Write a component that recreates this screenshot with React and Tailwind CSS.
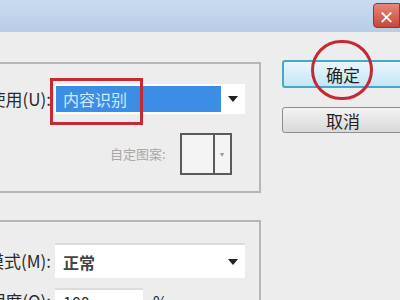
import React from "react";

const Arrow = () => (
  <span className="w-0 h-0 border-l-[5px] border-r-[5px] border-t-[6px] border-l-transparent border-r-transparent border-t-[#222]" />
);

const App = () => {
  return (
    <div
      className="relative w-[400px] h-[300px] overflow-hidden bg-[#ededed] text-[#2a2a2a]"
      style={{ fontFamily: '"Noto Sans CJK SC", "Noto Sans", sans-serif' }}
    >
      {/* Title bar */}
      <div className="h-[32px] bg-gradient-to-b from-[#c9dcf0] to-[#b7cde6] flex justify-end items-start">
        <div className="mt-[3px] w-[27px] h-[25px] rounded-l-[4px] bg-gradient-to-b from-[#e6877b] to-[#c5463a] border border-[#8d3a33] flex items-center justify-center text-white text-[16px] font-bold leading-none">
          ×
        </div>
      </div>

      <div className="flex">
        {/* Left: option groups */}
        <div className="w-[261px] shrink-0">
          {/* Content group */}
          <div className="mt-[30px] h-[131px] border-t-2 border-r-2 border-b-2 border-[#b6b6b6] pt-[20px]">
            <div className="flex items-center h-[30px]">
              <span className="w-[51px] shrink-0 text-[17px] whitespace-nowrap flex justify-end">
                <span className="-ml-[60px]">使用(U):</span>
              </span>
              <div className="ml-[4px] w-[190px] h-[30px] bg-white flex items-center">
                <div className="w-[165px] h-[26px] ml-[1px] bg-[#3c8de4] flex items-center pl-[7px] text-[16px] text-[#d6e7fa]">
                  内容识别
                </div>
                <div className="flex-1 flex justify-center">
                  <Arrow />
                </div>
              </div>
            </div>
            <div className="flex items-center mt-[19px] ml-[110px]">
              <span className="text-[13px] text-[#a9a9a9] whitespace-nowrap">自定图案:</span>
              <div className="ml-[14px] w-[52px] h-[42px] border-2 border-[#5a5a5a] bg-[#f4f4f4] flex">
                <div className="w-[33px] border-r-2 border-[#5a5a5a]" />
                <div className="flex-1 flex items-center justify-center text-[#999] text-[8px]">▾</div>
              </div>
            </div>
          </div>

          {/* Blending group */}
          <div className="mt-[27px] h-[100px] border-t-2 border-r-2 border-[#b6b6b6] pt-[21px]">
            <div className="flex items-center h-[35px]">
              <span className="w-[51px] shrink-0 text-[17px] whitespace-nowrap flex justify-end">
                <span className="-ml-[60px]">模式(M):</span>
              </span>
              <div className="ml-[4px] w-[190px] h-[35px] bg-white border-t-2 border-[#dcdcdc] flex items-center">
                <span className="flex-1 pl-[8px] text-[16px] font-bold text-[#444]">正常</span>
                <span className="w-[24px] flex justify-center">
                  <Arrow />
                </span>
              </div>
            </div>
            <div className="flex items-center mt-[10px] h-[26px]">
              <span className="w-[51px] shrink-0 text-[17px] whitespace-nowrap flex justify-end">
                <span className="-ml-[100px]">不透明度(O):</span>
              </span>
              <div className="ml-[4px] w-[88px] h-[26px] bg-white border-t-2 border-[#dcdcdc] pl-[8px] text-[16px]">100</div>
              <span className="ml-[10px] text-[16px]">%</span>
            </div>
          </div>
        </div>

        {/* Right: buttons */}
        <div className="ml-[21px] pt-[28px] flex flex-col gap-[19px]">
          <button className="w-[130px] h-[28px] rounded-[3px] border-2 border-[#46a9cc] bg-gradient-to-b from-[#eaf6fd] to-[#c4e6f8] text-[17px] leading-none text-left pl-[42px] text-[#222]">
            确定
          </button>
          <button className="w-[130px] h-[26px] rounded-[3px] border border-[#8c8c8c] bg-gradient-to-b from-[#f3f3f3] to-[#d9d9d9] text-[17px] leading-none text-left pl-[43px] text-[#222]">
            取消
          </button>
        </div>
      </div>

      {/* Annotations */}
      <div className="absolute left-[50px] top-[78px] w-[93px] h-[47px] border-[3px] border-[#c42a33]" />
      <div className="absolute left-[311px] top-[40px] w-[62px] h-[60px] rounded-full border-[3px] border-[#c42a33]" />
    </div>
  );
};

export default App;
